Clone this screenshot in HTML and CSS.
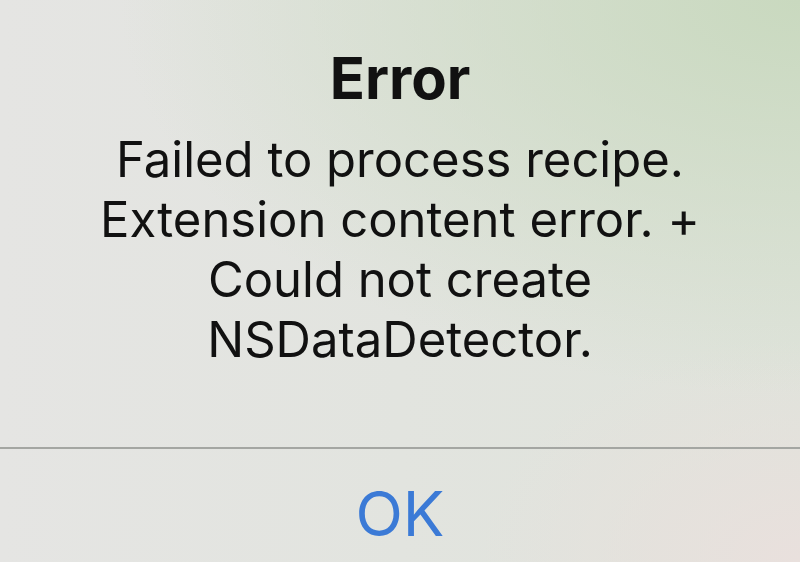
FILE: index.html
```html
<!DOCTYPE html>
<html lang="en">
<head>
    <meta charset="UTF-8">
    <meta name="viewport" content="width=device-width, initial-scale=1.0">
    <title>Error</title>
    <link rel="stylesheet" href="styles.css">
</head>
<body>
    <div class="alert">
        <div class="alert-body">
            <h1 class="alert-title">Error</h1>
            <p class="alert-message">Failed to process recipe.<br>Extension content error. +<br>Could not create<br>NSDataDetector.</p>
        </div>
        <div class="alert-actions">
            <button type="button" class="alert-button">OK</button>
        </div>
    </div>
</body>
</html>
```

FILE: styles.css
```css
html, body {
    height: 100%;
}

body {
    margin: 0;
    font-family: Inter, "Liberation Sans", Arial, sans-serif;
    color: #111;
    background-color: #e2e4de;
    background-image:
        radial-gradient(ellipse 85% 70% at 100% 0%, #c9d9bf 0%, rgba(201, 217, 191, 0.55) 45%, rgba(201, 217, 191, 0) 100%),
        radial-gradient(ellipse 40% 40% at 100% 100%, #e9e0dd 0%, rgba(233, 224, 221, 0) 100%),
        linear-gradient(to right, #e5e5e3, #dfe3db);
    overflow: hidden;
}

.alert {
    display: flex;
    flex-direction: column;
    height: 562px;
    text-align: center;
}

.alert-body {
    flex: 1;
    padding-top: 44px;
    border-bottom: 2px solid #a4a6a2;
}

.alert-title {
    margin: 0;
    font-size: 58px;
    font-weight: 700;
    line-height: 68px;
}

.alert-message {
    margin: 18px 0 0;
    font-size: 49px;
    font-weight: 400;
    line-height: 60px;
}

.alert-actions {
    height: 113px;
    display: flex;
    align-items: center;
    justify-content: center;
}

.alert-button {
    padding: 0;
    margin-top: 16px;
    border: none;
    background: none;
    font-family: inherit;
    font-size: 62px;
    color: #3b7ad6;
    cursor: pointer;
}
```
